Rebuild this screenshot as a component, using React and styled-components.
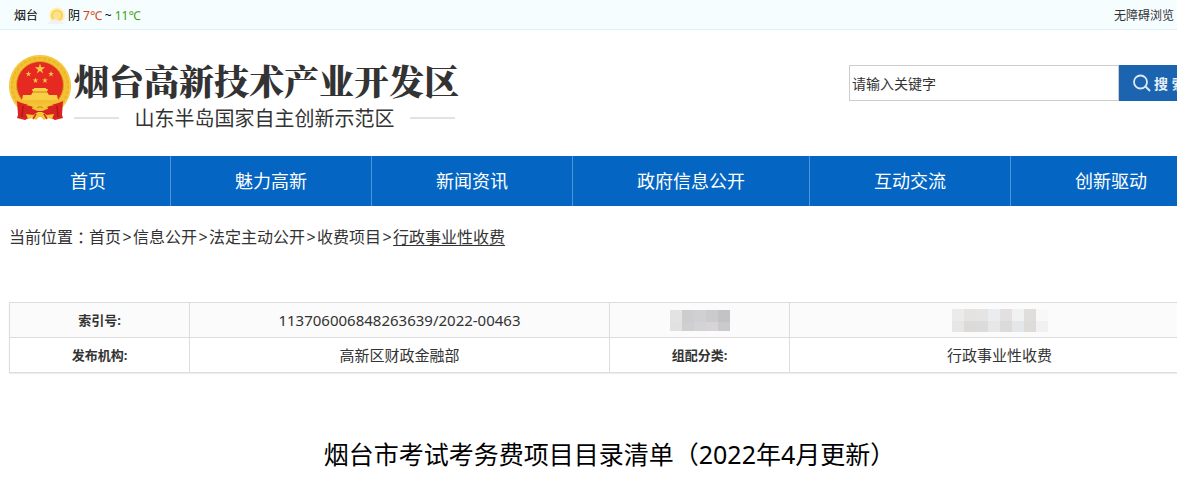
import React from 'react';
import styled, { createGlobalStyle } from 'styled-components';

const navItems = ['首页', '魅力高新', '新闻资讯', '政府信息公开', '互动交流', '创新驱动'];

const crumbs = ['首页', '信息公开', '法定主动公开', '收费项目', '行政事业性收费'];

const labelBlocks = [
  ['#e4e3e3', '#cdccce', '#d0cfd1', '#cbcacc', '#c3c2c4'],
  ['#e2e1e1', '#cfced0', '#d3d2d6', '#d7d4d7', '#cbc9cb'],
];

const valueBlocks = [
  ['#ebebeb', '#e4e3e2', '#e5e4e3', '#ebecef', '#e2e0e1', '#f0f2f1', '#dfdedd', '#f8f8f9'],
  ['#e6e6e5', '#dbdad9', '#dcdbdc', '#e7e7e8', '#dddadc', '#e4e6e9', '#dddcda', '#f1f1f3'],
];

const STAR = 'M0 -1 L.23 -.31 L.95 -.31 L.36 .12 L.59 .81 L0 .38 L-.59 .81 L-.36 .12 L-.95 -.31 L-.23 -.31Z';

const Star = ({ x, y, r }) => (
  <path d={STAR} transform={`translate(${x} ${y}) scale(${r})`} fill="#f6c644" />
);

const Emblem = () => (
  <svg width="62" height="65" viewBox="0 0 62 65" aria-hidden="true">
    <circle cx="31" cy="31" r="31" fill="#f2c233" />
    <circle cx="31" cy="31" r="28" fill="none" stroke="#ecb32b" strokeWidth="2" strokeDasharray="3 2" />
    <circle cx="31" cy="31" r="30" fill="none" stroke="#f6cd4d" strokeWidth="1" />
    <circle cx="31" cy="30" r="23.500" fill="#e62a22" stroke="#dda01f" strokeWidth="1" />
    <Star x={31} y={14} r={5.5} />
    <Star x={19.5} y={19} r={3} />
    <Star x={42} y={19} r={3} />
    <Star x={26.5} y={25.5} r={3} />
    <Star x={36} y={25.5} r={3} />
    <path
      d="M23 34 L25 34 L25 33 L37 33 L37 34 L39 34 L38 37 L40 40 L48 40 L49 45 L13 45 L14 40 L22 40 L24 37Z"
      fill="#f7cf45"
    />
    <path d="M24 37H38" stroke="#dc7c20" strokeWidth="1" />
    <path d="M10 45H52L49 51L38 55L31 53L24 55L13 51Z" fill="#f3bd2e" />
    <path
      d="M8 46 Q16 50 24 50 L23 54 L31 56 L39 54 L38 50 Q46 50 54 46 L53 60 L54 63 L46 65 L38 61 L31 58 L24 61 L16 65 L8 63 L9 60Z"
      fill="#d9231e"
    />
    <path d="M14 51 L13 62 M48 51 L49 62" stroke="#b11915" strokeWidth="1.500" />
    <path d="M17 50 Q25 46 31 50 Q37 46 45 50 L37 52 L36 55 Q31 57 26 55 L25 52Z" fill="#f4c437" />
    <path d="M28 53 Q31 50 34 53" fill="none" stroke="#c7851b" />
    <path d="M17 59 L24 60 L29 57 L33 57 L38 60 L45 59 L43 64 L38 63 L35 65 L31 61 L27 65 L24 63 L19 64Z" fill="#f5c533" />
    <path d="M24 64 L27 59 M38 64 L35 59" stroke="#cb3119" strokeWidth="1.500" />
  </svg>
);

const SunIcon = () => (
  <svg width="20" height="18" viewBox="0 0 20 18" aria-hidden="true">
    <circle cx="10" cy="8.500" r="8" fill="#fff0b5" />
    <circle cx="10" cy="8.500" r="6" fill="#fbd158" />
    <circle cx="10" cy="8.500" r="4" fill="#ffe38b" />
    <path d="M1 17 Q2 13 5 14 Q7 10 11 13 Q15 13 17 17Z" fill="#eff1f5" opacity="0.900" />
  </svg>
);

const SearchIcon = () => (
  <svg width="18" height="18" viewBox="0 0 18 18" fill="none" stroke="#dce8f5" aria-hidden="true">
    <circle cx="7.500" cy="8" r="6.500" strokeWidth="1.800" />
    <path d="M12.500 12.500 L17 17" strokeWidth="2" />
  </svg>
);

const Mosaic = ({ rows, height }) => (
  <MosaicSvg width={rows[0].length * 12} height={height} shapeRendering="crispEdges" aria-hidden="true">
    {rows.map((row, y) =>
      row.map((fill, x) => (
        <rect key={`${x}-${y}`} x={x * 12} y={y * 12} width="12" height="12" fill={fill} />
      ))
    )}
  </MosaicSvg>
);

const App = () => {
  return (
    <>
      <GlobalStyle />
      <TopBar>
        <Weather>
          <City>烟台</City>
          <SunIcon />
          <span>阴</span>
          <Temp $color="#d5400f">7℃</Temp>
          <span>~</span>
          <Temp $color="#3a9f10">11℃</Temp>
        </Weather>
        <TopLink href="#">无障碍浏览</TopLink>
      </TopBar>
      <Header>
        <Brand>
          <Emblem />
          <BrandText>
            <BrandName>烟台高新技术产业开发区</BrandName>
            <BrandSub>山东半岛国家自主创新示范区</BrandSub>
          </BrandText>
        </Brand>
        <SearchForm onSubmit={(e) => e.preventDefault()}>
          <SearchInput type="text" placeholder="请输入关键字" aria-label="请输入关键字" />
          <SearchButton type="submit">
            <SearchIcon />
            搜 索
          </SearchButton>
        </SearchForm>
      </Header>
      <Nav>
        {navItems.map((item) => (
          <NavLink href="#" key={item}>
            {item}
          </NavLink>
        ))}
      </Nav>
      <Content>
        <Breadcrumb>
          当前位置<Colon>：</Colon>
          {crumbs.map((crumb, i) => (
            <React.Fragment key={crumb}>
              {i > 0 && <Separator>&gt;</Separator>}
              <CrumbLink href="#" $current={i === crumbs.length - 1}>
                {crumb}
              </CrumbLink>
            </React.Fragment>
          ))}
        </Breadcrumb>
        <InfoTable>
          <tbody>
            <InfoRow $shaded>
              <InfoLabel scope="row">索引号:</InfoLabel>
              <InfoValue>113706006848263639/2022-00463</InfoValue>
              <InfoLabel as="td">
                <Mosaic rows={labelBlocks} height={21} />
              </InfoLabel>
              <InfoValue>
                <Mosaic rows={valueBlocks} height={23} />
              </InfoValue>
            </InfoRow>
            <InfoRow>
              <InfoLabel scope="row">发布机构:</InfoLabel>
              <InfoValue>高新区财政金融部</InfoValue>
              <InfoLabel scope="row">组配分类:</InfoLabel>
              <InfoValue>行政事业性收费</InfoValue>
            </InfoRow>
          </tbody>
        </InfoTable>
        <Title>烟台市考试考务费项目目录清单（2022年4月更新）</Title>
      </Content>
    </>
  );
};

export default App;

const GlobalStyle = createGlobalStyle`
  * {
    box-sizing: border-box;
  }

  html {
    overflow: hidden;
  }

  body {
    margin: 0;
    background: #fff;
    color: #333;
    font-family: "Noto Sans", "Noto Sans CJK SC", sans-serif;
  }

  a {
    color: inherit;
    text-decoration: none;
  }
`;

const TopBar = styled.div`
  display: flex;
  align-items: center;
  justify-content: space-between;
  height: 30px;
  padding: 2px 3px 0 14px;
  background: #f5fdff;
  border-bottom: 1px solid #dcf1f8;
  font-size: 12px;
  line-height: 18px;
`;

const Weather = styled.div`
  display: flex;
  align-items: center;
  gap: 3px;
  color: #000;
  white-space: nowrap;

  svg {
    margin-right: -2px;
  }
`;

const City = styled.span`
  margin-right: 6px;
`;

const Temp = styled.span`
  color: ${(props) => props.$color};
`;

const TopLink = styled.a`
  color: #333;
`;

const Header = styled.header`
  display: flex;
  justify-content: space-between;
  align-items: flex-start;
  min-width: 1218px;
  height: 126px;
  padding: 25px 9px 0;
`;

const Brand = styled.div`
  display: flex;
  gap: 3px;
`;

const BrandText = styled.div`
  white-space: nowrap;
`;

const BrandName = styled.h1`
  margin: 0;
  font-family: "Noto Serif CJK SC", "Noto Sans CJK SC", serif;
  font-size: 35px;
  font-weight: 900;
  line-height: 50px;
`;

const BrandSub = styled.div`
  display: flex;
  align-items: center;
  justify-content: space-between;
  padding-right: 4px;
  font-family: "Noto Sans CJK SC", sans-serif;
  font-size: 20px;
  font-weight: 400;
  line-height: 26px;

  &::before,
  &::after {
    content: '';
    width: 45px;
    height: 2px;
    background: #e2e2e2;
  }
`;

const SearchForm = styled.form`
  display: flex;
  height: 36px;
  margin-top: 10px;
`;

const SearchInput = styled.input`
  width: 270px;
  padding: 0 2px;
  border: 1px solid #ccc;
  border-radius: 0;
  background: #fff;
  color: #333;
  font: inherit;
  font-size: 14px;

  &::placeholder {
    color: #333;
    opacity: 1;
  }
`;

const SearchButton = styled.button`
  display: flex;
  align-items: center;
  gap: 3px;
  width: 90px;
  padding: 0 0 0 14px;
  border: 0;
  background: #1c64b0;
  color: #e6eff8;
  font: inherit;
  font-size: 14px;
  font-weight: 700;
  white-space: nowrap;
`;

const Nav = styled.nav`
  display: flex;
  height: 50px;
  padding-left: 6px;
  overflow: hidden;
  background: #0466c2;
`;

const NavLink = styled.a`
  flex: none;
  padding: 0 64px;
  color: #fff;
  font-size: 18px;
  line-height: 50px;

  & + & {
    border-left: 1px solid #4f95d6;
  }
`;

const Content = styled.main`
  min-width: 1219px;
  padding: 0 9px;
`;

const Breadcrumb = styled.div`
  display: flex;
  padding: 19px 0 53px;
  font-size: 16px;
  line-height: 24px;
`;

const Colon = styled.span`
  font-family: "Noto Sans CJK TC", sans-serif;
`;

const Separator = styled.span`
  width: 12px;
  text-align: center;
`;

const CrumbLink = styled.a`
  text-decoration: ${(props) => (props.$current ? 'underline' : 'none')};
  text-underline-offset: 2px;
`;

const InfoTable = styled.table`
  width: 100%;
  table-layout: fixed;
  border-collapse: collapse;
  box-shadow: 0 1px 1px #eee;
`;

const InfoRow = styled.tr`
  height: 35px;
  background: ${(props) => (props.$shaded ? '#fbfbfb' : '#fff')};
`;

const InfoLabel = styled.th`
  width: 15%;
  padding: 0;
  border: 1px solid #ddd;
  font-size: 13px;
  font-weight: 700;
  line-height: 24px;
  text-align: center;
`;

const InfoValue = styled.td`
  width: 35%;
  padding: 0;
  border: 1px solid #ddd;
  font-size: 15px;
  line-height: 24px;
  text-align: center;
`;

const MosaicSvg = styled.svg`
  display: block;
  margin: 0 auto;
`;

const Title = styled.h2`
  margin: 62px 0 0;
  color: #000;
  font-size: 25px;
  font-weight: 400;
  line-height: 38px;
  text-align: center;
`;
